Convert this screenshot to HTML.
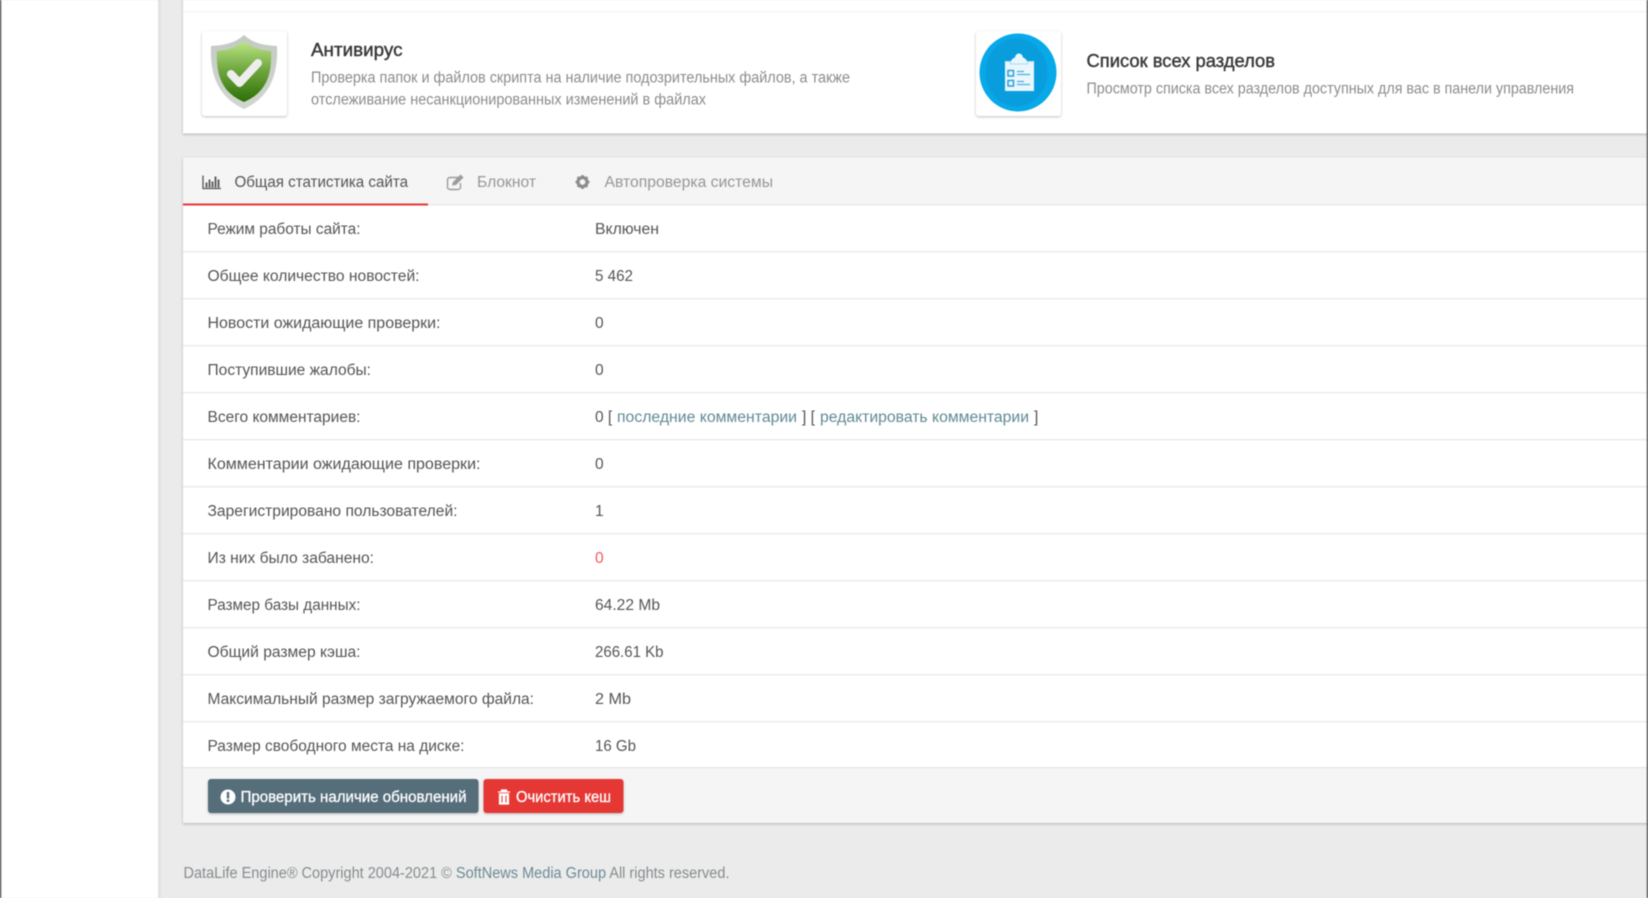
<!DOCTYPE html>
<html lang="ru"><head><meta charset="utf-8"><title>DataLife Engine</title>
<style>
html,body{margin:0;padding:0;width:1648px;height:898px;overflow:hidden;background:#ebebeb}
svg{display:block;filter:blur(.5px)}
text{font-family:"Liberation Sans","DejaVu Sans",sans-serif;font-size:15.5px;fill:#555}
.d{fill:#8c8c8c}.t{fill:#383838;font-size:18px;stroke:#383838;stroke-width:.4px}
.g{fill:#969696}.l{fill:#5f8a94}.w{fill:#fff;stroke:#fff;stroke-width:.3px}.f{fill:#868b8e}
</style></head><body>
<svg width="1648" height="898" viewBox="0 0 1648 898" xmlns="http://www.w3.org/2000/svg">
<defs>
<linearGradient id="sg" x1="0" y1="0" x2="0" y2="1"><stop offset="0" stop-color="#bce686"/><stop offset=".45" stop-color="#73aa42"/><stop offset="1" stop-color="#2c6e06"/></linearGradient>
<linearGradient id="sr" x1="0" y1="0" x2="0" y2="1"><stop offset="0" stop-color="#c4cac3"/><stop offset="1" stop-color="#d2d6d1"/></linearGradient>
<filter id="sh" x="-10%" y="-10%" width="120%" height="120%"><feDropShadow dx="0" dy="1" stdDeviation="1.200" flood-color="#000" flood-opacity=".25"/></filter>
</defs>
<rect width="1648" height="898" fill="#ebebeb"/>
<rect x="0" y="0" width="158" height="898" fill="#fff"/>
<rect x="158" y="0" width="3" height="898" fill="#e2e2e2"/>
<rect x="0" y="0" width="1.200" height="898" fill="#3c3c3c"/>

<!-- top panel -->
<rect x="183" y="-5" width="1470" height="138.500" fill="#fff" filter="url(#sh)"/>
<rect x="183" y="11" width="1465" height="1.200" fill="#f0f0f0"/>
<rect x="202" y="31" width="85" height="85" rx="3" fill="#fff" filter="url(#sh)"/>
<path d="M244 35C252 42 260 45 277 46C278 70 273 96 244 109C215 96 210 70 211 46C228 45 236 42 244 35Z" fill="url(#sr)"/>
<path d="M244 41C251 47 259 50 271 51C272 72 268 92 244 102C220 92 216 72 217 51C229 50 237 47 244 41Z" fill="url(#sg)"/>
<path d="M231 74L239.500 83L258 63" fill="none" stroke="#eeeeee" stroke-width="8" stroke-linecap="round" stroke-linejoin="round"/>

<text class="t" x="311" y="56" textLength="91.500" lengthAdjust="spacingAndGlyphs">Антивирус</text>
<text class="d" x="311" y="82.500" textLength="539" lengthAdjust="spacingAndGlyphs">Проверка папок и файлов скрипта на наличие подозрительных файлов, а также</text>
<text class="d" x="311" y="104.500" textLength="395" lengthAdjust="spacingAndGlyphs">отслеживание несанкционированных изменений в файлах</text>

<rect x="976" y="31" width="85" height="85" rx="3" fill="#fff" filter="url(#sh)"/>
<ellipse cx="1018" cy="72.500" rx="38.500" ry="39" fill="#07a9e8"/>
<ellipse cx="1016.500" cy="72.500" rx="31" ry="34" fill="#0a9ddd"/>
<path d="M1005 61H1011C1012 59 1013.500 58 1015 57.500C1015.500 55 1017 53.500 1019 53.500C1021 53.500 1022.500 55 1023 57.500C1024.500 58 1026 59 1027 61H1034V91H1005Z" fill="#e9f7fd"/>
<path d="M1006 61.500H1010.500V64H1027.500V61.500H1033" fill="none" stroke="#8ed3f0" stroke-width=".8"/>
<rect x="1008" y="70.500" width="5.500" height="5.500" fill="none" stroke="#2a9fd8" stroke-width="1.500"/>
<rect x="1008" y="80.500" width="5.500" height="5.500" fill="none" stroke="#2a9fd8" stroke-width="1.500"/>
<path d="M1017 71.500H1024M1017 74.500H1030M1017 81.500H1024M1017 84.500H1030" stroke="#4aaedc" stroke-width="1.300"/>

<text class="t" x="1086.500" y="67" textLength="188.500" lengthAdjust="spacingAndGlyphs">Список всех разделов</text>
<text class="d" x="1086.500" y="93.500" textLength="487.500" lengthAdjust="spacingAndGlyphs">Просмотр списка всех разделов доступных для вас в панели управления</text>

<!-- stats panel -->
<rect x="183" y="157.500" width="1470" height="665.500" fill="#fff" filter="url(#sh)"/>
<rect x="183" y="157.500" width="1465" height="47" fill="#f5f5f5"/>
<rect x="183" y="204" width="1465" height="1.500" fill="#e8e8e8"/>
<rect x="183" y="203.500" width="245" height="2" fill="#e53935"/>

<!-- chart icon -->
<path d="M203 175.500V188.500H221" fill="none" stroke="#555" stroke-width="1.300"/>
<path d="M206.500 187.500V182.500M209.500 187.500V179.500M212.500 187.500V181.500M215.500 187.500V176.500M218.500 187.500V179.500" stroke="#555" stroke-width="1.800"/>
<text x="234.500" y="187" textLength="173.500" lengthAdjust="spacingAndGlyphs">Общая статистика сайта</text>

<!-- edit icon -->
<path d="M458 177.500H450C448.500 177.500 447.500 178.500 447.500 180V187C447.500 188.500 448.500 189.500 450 189.500H458C459.500 189.500 460.500 188.500 460.500 187V183" fill="none" stroke="#9c9c9c" stroke-width="1.400"/>
<path d="M452 185.500L453 182L460.500 174.500L463.500 177.500L456 185Z" fill="#9c9c9c"/>
<text class="g" x="477" y="187" textLength="59" lengthAdjust="spacingAndGlyphs">Блокнот</text>

<!-- gear icon -->
<circle cx="582.500" cy="182" r="4.500" fill="none" stroke="#8c8c8c" stroke-width="3.200"/>
<path d="M582.500 175V189M575.500 182H589.500M577.500 177L587.500 187M587.500 177L577.500 187" stroke="#8c8c8c" stroke-width="2.200" stroke-dasharray="2.500 9"/>
<text class="g" x="604.500" y="187" textLength="168.500" lengthAdjust="spacingAndGlyphs">Автопроверка системы</text>

<!-- separators -->
<g fill="#ececec">
<rect x="183" y="251" width="1465" height="1.500"/><rect x="183" y="298" width="1465" height="1.500"/>
<rect x="183" y="345" width="1465" height="1.500"/><rect x="183" y="392" width="1465" height="1.500"/>
<rect x="183" y="439" width="1465" height="1.500"/><rect x="183" y="486" width="1465" height="1.500"/>
<rect x="183" y="533" width="1465" height="1.500"/><rect x="183" y="580" width="1465" height="1.500"/>
<rect x="183" y="627" width="1465" height="1.500"/><rect x="183" y="674" width="1465" height="1.500"/>
<rect x="183" y="721" width="1465" height="1.500"/>
</g>

<!-- labels -->
<text x="207.500" y="234" textLength="153" lengthAdjust="spacingAndGlyphs">Режим работы сайта:</text>
<text x="207.500" y="281" textLength="212" lengthAdjust="spacingAndGlyphs">Общее количество новостей:</text>
<text x="207.500" y="328" textLength="233" lengthAdjust="spacingAndGlyphs">Новости ожидающие проверки:</text>
<text x="207.500" y="375" textLength="163.500" lengthAdjust="spacingAndGlyphs">Поступившие жалобы:</text>
<text x="207.500" y="422" textLength="153" lengthAdjust="spacingAndGlyphs">Всего комментариев:</text>
<text x="207.500" y="469" textLength="273" lengthAdjust="spacingAndGlyphs">Комментарии ожидающие проверки:</text>
<text x="207.500" y="516" textLength="250" lengthAdjust="spacingAndGlyphs">Зарегистрировано пользователей:</text>
<text x="207.500" y="563" textLength="166.500" lengthAdjust="spacingAndGlyphs">Из них было забанено:</text>
<text x="207.500" y="610" textLength="153" lengthAdjust="spacingAndGlyphs">Размер базы данных:</text>
<text x="207.500" y="657" textLength="153" lengthAdjust="spacingAndGlyphs">Общий размер кэша:</text>
<text x="207.500" y="704" textLength="326.500" lengthAdjust="spacingAndGlyphs">Максимальный размер загружаемого файла:</text>
<text x="207.500" y="751" textLength="257" lengthAdjust="spacingAndGlyphs">Размер свободного места на диске:</text>

<!-- values -->
<text x="595" y="234" textLength="64" lengthAdjust="spacingAndGlyphs">Включен</text>
<text x="595" y="281" textLength="38" lengthAdjust="spacingAndGlyphs">5 462</text>
<text x="595" y="328">0</text>
<text x="595" y="375">0</text>
<text x="595" y="422">0 [</text>
<text class="l" x="617" y="422" textLength="180" lengthAdjust="spacingAndGlyphs">последние комментарии</text>
<text x="802" y="422">] [</text>
<text class="l" x="820" y="422" textLength="209" lengthAdjust="spacingAndGlyphs">редактировать комментарии</text>
<text x="1034" y="422">]</text>
<text x="595" y="469">0</text>
<text x="595" y="516">1</text>
<text x="595" y="563" style="fill:#f0595a">0</text>
<text x="595" y="610" textLength="65" lengthAdjust="spacingAndGlyphs">64.22 Mb</text>
<text x="595" y="657" textLength="68.500" lengthAdjust="spacingAndGlyphs">266.61 Kb</text>
<text x="595" y="704" textLength="36" lengthAdjust="spacingAndGlyphs">2 Mb</text>
<text x="595" y="751" textLength="41" lengthAdjust="spacingAndGlyphs">16 Gb</text>

<!-- footer band -->
<rect x="183" y="768" width="1465" height="55" fill="#f5f5f5"/>
<rect x="183" y="767" width="1465" height="1.200" fill="#e4e4e4"/>
<rect x="208" y="779" width="270.500" height="34" rx="3" fill="#546e7a" filter="url(#sh)"/>
<rect x="483.500" y="779" width="140" height="34" rx="3" fill="#e53935" filter="url(#sh)"/>
<circle cx="228" cy="797" r="7.500" fill="#fff"/>
<rect x="226.800" y="792" width="2.400" height="6.500" fill="#546e7a"/><rect x="226.800" y="799.500" width="2.400" height="2.400" fill="#546e7a"/>
<text class="w" x="240.500" y="802" textLength="226" lengthAdjust="spacingAndGlyphs">Проверить наличие обновлений</text>
<path d="M498 792H510M501.500 792V790H506.500V792M499.500 794H508.500V804H499.500Z" fill="#fff" stroke="#fff" stroke-width="1.200"/>
<path d="M502 795.500V802.500M506 795.500V802.500" stroke="#e53935" stroke-width="1"/>
<text class="w" x="516" y="802" textLength="95" lengthAdjust="spacingAndGlyphs">Очистить кеш</text>

<text class="f" x="183.500" y="878" textLength="546" lengthAdjust="spacingAndGlyphs">DataLife Engine® Copyright 2004-2021 © <tspan fill="#6d8a94">SoftNews Media Group</tspan> All rights reserved.</text>

<rect x="1646.800" y="0" width="1.200" height="898" fill="#3c3c3c"/>
</svg>
</body></html>
